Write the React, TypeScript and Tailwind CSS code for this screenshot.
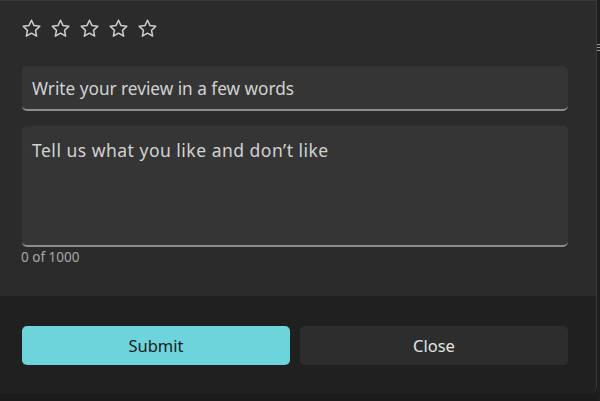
import React, { useState } from 'react';

function Star() {
  return (
    <svg width="21" height="21" viewBox="0 0 24 24" fill="none" stroke="#cfcfcf" strokeWidth="1.7" strokeLinejoin="round">
      <path d="M12 2.6l2.9 6.1 6.6.8-4.9 4.6 1.3 6.6L12 17.4l-5.9 3.3 1.3-6.6-4.9-4.6 6.6-.8z" />
    </svg>
  );
}

export default function App() {
  const [title, setTitle] = useState('');
  const [body, setBody] = useState('');

  return (
    <div
      className="flex w-[600px] h-[401px] bg-[#1b1b1b] overflow-hidden"
      style={{ fontFamily: '"Noto Sans", "Open Sans", sans-serif' }}
    >
      <div className="flex flex-col w-[597px] h-[394px] border-t border-r border-[#3a3a3a] rounded-br-[8px] overflow-hidden">
        {/* Body */}
        <div className="flex flex-col h-[295px] bg-[#2b2b2b] px-[21px] pt-[17px]">
          <div className="flex gap-[8px]">
            {[0, 1, 2, 3, 4].map((i) => (
              <Star key={i} />
            ))}
          </div>
          <div className="mt-[27px] ml-px w-[546px] h-[45px] rounded-[5px] bg-[#353535] border-b-2 border-[#8c8c8c] flex items-center">
            <input
              value={title}
              onChange={(e) => setTitle(e.target.value)}
              placeholder="Write your review in a few words"
              className="w-full bg-transparent outline-none px-[10px] pt-[3px] text-[17.2px] text-[#d6d6d6] placeholder:text-[#d2d2d2]"
            />
          </div>
          <div className="mt-[15px] ml-px w-[546px] h-[121px] rounded-[5px] bg-[#353535] border-b-2 border-[#8c8c8c] flex">
            <textarea
              value={body}
              onChange={(e) => setBody(e.target.value)}
              placeholder="Tell us what you like and don’t like"
              className="w-full h-full resize-none bg-transparent outline-none px-[10px] pt-[11px] text-[17.5px] tracking-[0.5px] text-[#d6d6d6] placeholder:text-[#d2d2d2]"
            />
          </div>
          <div className="text-[13.5px] text-[#a8a8a8]">{body.length} of 1000</div>
        </div>
        {/* Footer */}
        <div className="flex-1 bg-[#202020] px-[22px] pt-[30px] flex gap-[10px]">
          <button className="w-[268px] h-[39px] rounded-[5px] bg-[#6dd4dc] text-[#1b1b1b] text-[16.5px] pt-px">
            Submit
          </button>
          <button className="w-[268px] h-[39px] rounded-[5px] bg-[#2d2d2d] text-[#e4e4e4] text-[16.5px] pt-px">
            Close
          </button>
        </div>
      </div>
      <div className="flex-1 relative bg-[#1e1e1e]">
        <div className="absolute left-0 top-[44px] flex flex-col gap-[2px]">
          <div className="w-[3px] h-px bg-[#9a9a9a]" />
          <div className="w-[3px] h-px bg-[#9a9a9a]" />
          <div className="w-[3px] h-px bg-[#9a9a9a]" />
        </div>
      </div>
    </div>
  );
}
